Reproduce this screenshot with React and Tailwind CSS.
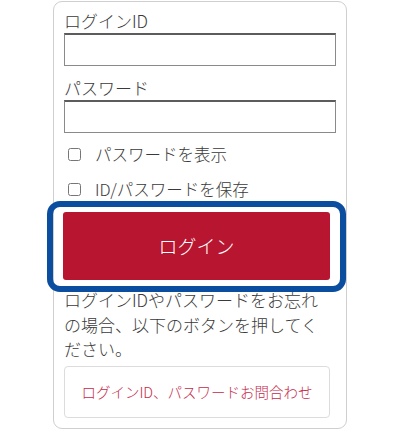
import React, { useState } from "react";

const font = { fontFamily: '"Noto Sans CJK JP", "Noto Sans", sans-serif' };

const LoginBox = () => {
  const [form, setForm] = useState({ id: "", password: "", show: false, save: false });

  const handleChange = (e) => {
    const { name, value, type, checked } = e.target;
    setForm({ ...form, [name]: type === "checkbox" ? checked : value });
  };

  return (
    <div className="bg-white min-h-screen pt-px" style={font}>
      <div className="mx-auto w-[294px] border border-[#cfcfcf] rounded-[9px] px-[10px] pt-[7px] pb-[10px] text-[#3a3a3a] font-light">
        <label className="block text-[17px] leading-[24px]">ログインID</label>
        <input
          type="text"
          name="id"
          value={form.id}
          onChange={handleChange}
          className="block w-full h-[33px] border border-[#8a8a8a] border-t-2 border-t-[#5c5c5c] px-2 outline-none"
        />

        <label className="block mt-[10px] text-[17px] leading-[24px]">パスワード</label>
        <input
          type={form.show ? "text" : "password"}
          name="password"
          value={form.password}
          onChange={handleChange}
          className="block w-full h-[33px] border border-[#8a8a8a] border-t-2 border-t-[#5c5c5c] px-2 outline-none"
        />

        <label className="flex items-center mt-[9px] h-[25px] text-[16.5px]">
          <input type="checkbox" name="show" checked={form.show} onChange={handleChange} className="ml-1 mr-[14px] w-[13px] h-[13px] accent-[#767676]" />
          パスワードを表示
        </label>
        <label className="flex items-center mt-[10px] h-[25px] text-[16.5px]">
          <input type="checkbox" name="save" checked={form.save} onChange={handleChange} className="ml-1 mr-[14px] w-[13px] h-[13px] accent-[#767676]" />
          ID/パスワードを保存
        </label>

        <div className="relative w-[267px] mt-[10px] -ml-px">
          <button className="w-full h-[68px] bg-[#b71530] text-white text-[19px] rounded-[3px]">
            ログイン
          </button>
          <div className="absolute -left-[16px] -right-[16px] -top-[11px] -bottom-[12px] border-[6px] border-[#0b4d9f] rounded-[13px] pointer-events-none"></div>
        </div>

        <p className="w-[266px] mt-[8px] text-[17px] leading-[24.5px]">
          ログインIDやパスワードをお忘れの場合、以下のボタンを押してください。
        </p>

        <button className="block w-[266px] h-[52px] mt-[4px] border border-[#dcdcdc] rounded-[4px] text-[#c52a4b] text-[14.5px]">
          ログインID、パスワードお問合わせ
        </button>
      </div>
    </div>
  );
};

export default LoginBox;
